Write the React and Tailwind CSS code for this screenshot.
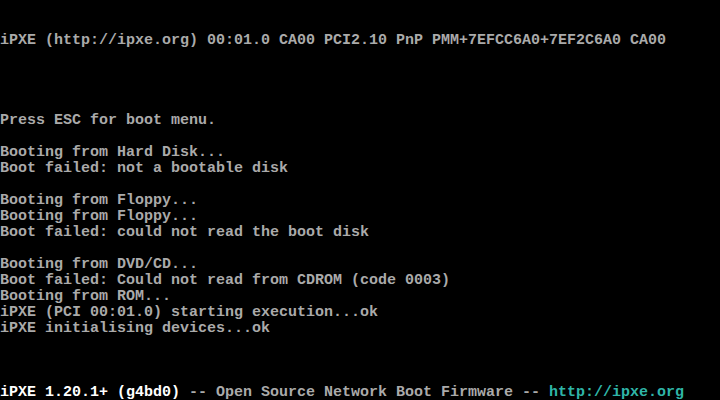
import React from 'react';

const lines = [
    '',
    '',
    'iPXE (http://ipxe.org) 00:01.0 CA00 PCI2.10 PnP PMM+7EFCC6A0+7EF2C6A0 CA00',
    '',
    '',
    '',
    '',
    'Press ESC for boot menu.',
    '',
    'Booting from Hard Disk...',
    'Boot failed: not a bootable disk',
    '',
    'Booting from Floppy...',
    'Booting from Floppy...',
    'Boot failed: could not read the boot disk',
    '',
    'Booting from DVD/CD...',
    'Boot failed: Could not read from CDROM (code 0003)',
    'Booting from ROM...',
    'iPXE (PCI 00:01.0) starting execution...ok',
    'iPXE initialising devices...ok',
    '',
    '',
    '',
];

const App = () => {
    return (
        <div className="w-[720px] h-[400px] pt-px bg-black overflow-hidden text-[15px] leading-4 text-[#aaaaaa] font-['Liberation_Mono','DejaVu_Sans_Mono',monospace] font-bold">
            {lines.map((line, i) => (
                <div key={i} className="h-4 whitespace-pre">{line}</div>
            ))}
            {/* status line */}
            <div className="h-4 whitespace-pre">
                <span className="text-white">iPXE 1.20.1+ (g4bd0)</span>
                <span> -- Open Source Network Boot Firmware -- </span>
                <span className="text-[#2fb5a8]">http://ipxe.org</span>
            </div>
        </div>
    );
};

export default App;
